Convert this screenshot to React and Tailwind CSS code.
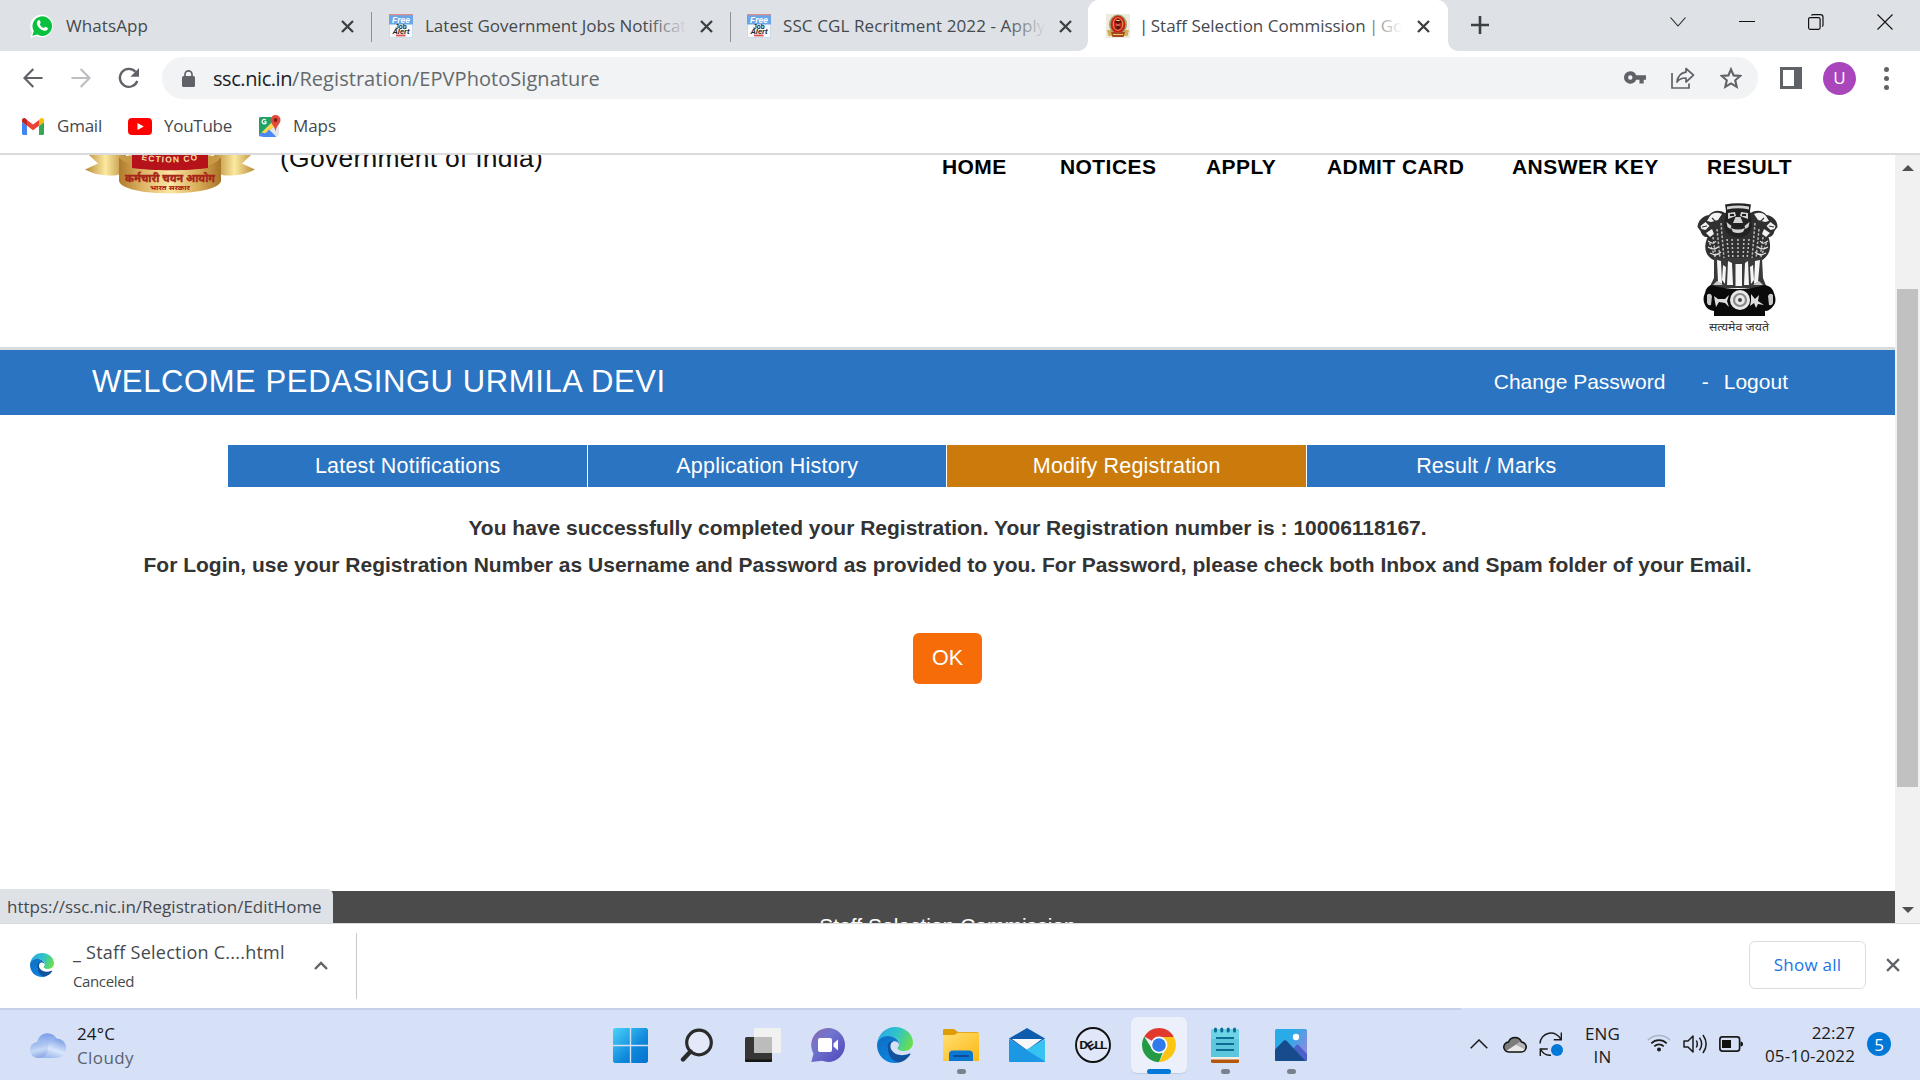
const UI = "font-['Open_Sans',sans-serif]";

/* ---------- browser icons ---------- */

const WhatsAppIcon = () => (
  <svg className="w-6 h-6 shrink-0" viewBox="0 0 24 24">
    <path d="M.5 23.8 2 18A11.3 11.3 0 1 1 6.300 22z" fill="#fff" />
    <path d="M2.300 21.700 3.800 17A9.800 9.800 0 1 1 7.400 20.600z" fill="#0ac03f" />
    <path d="M8.500 6.300c.6-.4 1.200-.1 1.400.4l.8 1.900c.1.700-.9 1.300-.8 1.800.8 1.700 2.100 2.900 3.900 3.600.6 0 1-1.300 1.700-1.200l2 1c.5.400.3 1.300-.1 1.900-1 1.200-2.400 1.400-4.200.8-3.100-1.100-5.300-3.500-6.200-6-.5-1.800.2-3.500 1.500-4.200z" fill="#fff" />
  </svg>
);

const JobAlertIcon = () => (
  <svg className="w-6 h-6 shrink-0" viewBox="0 0 24 24">
    <rect x=".5" y=".5" width="23" height="23" fill="#f7fafc" stroke="#cfdbe8" />
    <rect x="0" y="1" width="24" height="9.500" fill="#6aa5e6" />
    <rect x="0" y="0" width="24" height="1.200" fill="#e38a8a" />
    <text x="12" y="8.700" textAnchor="middle" fontFamily="Liberation Sans" fontSize="8.500" fontWeight="700" fontStyle="italic" fill="#fff">Free</text>
    <text x="12" y="15" textAnchor="middle" fontFamily="Liberation Sans" fontSize="6.500" fontWeight="700" fill="#222">Job</text>
    <text x="12" y="20" textAnchor="middle" fontFamily="Liberation Sans" fontSize="7.500" fontWeight="700" fontStyle="italic" fill="#222">Alert</text>
    <rect x="7" y="20.600" width="9.500" height="1.800" fill="#e05050" />
  </svg>
);

const SscIcon = () => (
  <svg className="w-6 h-6 shrink-0" viewBox="0 0 24 24">
    <rect width="24" height="24" fill="#ecebdc" />
    <path d="M1 16h22l-1.500 6H2.500z" fill="#d3ae55" />
    <ellipse cx="12" cy="10.500" rx="9" ry="10" fill="#9fa06a" />
    <ellipse cx="12" cy="10.500" rx="7.300" ry="9" fill="#c8201c" />
    <ellipse cx="12" cy="10" rx="4.800" ry="6.300" fill="none" stroke="#e8b04a" strokeWidth=".9" />
    <path d="M12 4.500v11M9 8h6M9.500 13.500h5" stroke="#5b1510" strokeWidth="1.800" />
    <path d="M10.500 6.500h3M10.500 11h3" stroke="#f3dc8a" strokeWidth="1" />
    <path d="M5 18h14l-1.500 5h-11z" fill="#a8471f" />
    <path d="M7 20.500h10" stroke="#e9c76a" strokeWidth="1" />
  </svg>
);

const CloseX = ({ className = "w-[13px] h-[13px]", color = "#3c4043", width = 2.3 }) => (
  <svg className={`${className} shrink-0`} viewBox="0 0 13 13">
    <path d="M1 1l11 11M12 1L1 12" stroke={color} strokeWidth={width} />
  </svg>
);

const GmailIcon = () => (
  <svg className="w-[22px] h-[17px]" viewBox="0 0 22 17">
    <path d="M0 4l5 3.700V17H1.500A1.500 1.500 0 0 1 0 15.500z" fill="#4285f4" />
    <path d="M22 4l-5 3.700V17h3.500a1.500 1.500 0 0 0 1.500-1.500z" fill="#34a853" />
    <path d="M17 2v5.700L22 4V2.200C22 .2 19.800-.6 18.300.6z" fill="#fbbc04" />
    <path d="M5 7.700V2l6 4.500L17 2v5.700l-6 4.500z" fill="#ea4335" />
    <path d="M0 2.200V4l5 3.700V2L3.700.6C2.200-.6 0 .2 0 2.200z" fill="#c5221f" />
  </svg>
);

const YouTubeIcon = () => (
  <svg className="w-6 h-[17px]" viewBox="0 0 24 17">
    <rect width="24" height="17" rx="4" fill="#f00" />
    <path d="M9.500 5l6.300 3.500L9.500 12z" fill="#fff" />
  </svg>
);

const MapsIcon = () => (
  <svg className="w-[23px] h-[23px]" viewBox="0 0 23 23">
    <path d="M2.500 2h17A1.500 1.500 0 0 1 21 3.500v16a1.500 1.500 0 0 1-1.500 1.500h-17A1.500 1.500 0 0 1 1 19.500v-16A1.500 1.500 0 0 1 2.500 2z" fill="#e4e6e8" />
    <path d="M2.500 2H13v8L1 20V3.500A1.500 1.500 0 0 1 2.500 2z" fill="#1fa363" />
    <path d="M1 20L13.500 7.500l3 3L5 21.500H2.500A1.500 1.500 0 0 1 1 20z" fill="#4a89f3" />
    <path d="M3.500 17.500L14 7.200l3 3-8.500 8.300z" fill="#ffd84d" />
    <path d="M4 22l7-7.500 7.500 7.500z" fill="#4a89f3" />
    <path d="M17.500 0A5 5 0 0 0 12.500 5c0 4 4 5 5 11.500C18.500 10 22.500 9 22.500 5a5 5 0 0 0-5-5z" fill="#e1493b" />
    <circle cx="17.500" cy="5" r="1.900" fill="#7a1f18" />
    <path d="M7.800 5A2.200 2.200 0 1 0 8 8V6.800H6.300" fill="none" stroke="#fff" strokeWidth="1.200" />
  </svg>
);

const BackIcon = () => (
  <svg className="w-5 h-5" viewBox="0 0 20 20" fill="none" stroke="#5f6368" strokeWidth="2.200">
    <path d="M19.500 10H1.800M10.300 1L1.500 10l8.800 9" />
  </svg>
);
const ForwardIcon = () => (
  <svg className="w-5 h-5" viewBox="0 0 20 20" fill="none" stroke="#bcbec1" strokeWidth="2.200">
    <path d="M.5 10h17.700M9.700 1l8.800 9-8.800 9" />
  </svg>
);
const ReloadIcon = () => (
  <svg className="w-[22px] h-[22px] -ml-px" viewBox="0 0 22 22">
    <path d="M19.300 14A9 9 0 1 1 17.500 4.700" fill="none" stroke="#5f6368" strokeWidth="2.300" />
    <path d="M21 1v8.700h-8.600z" fill="#5f6368" />
  </svg>
);
const LockIcon = () => (
  <svg className="w-[13px] h-[17px]" viewBox="0 0 13 17">
    <rect y="6" width="13" height="11" rx="1.500" fill="#5f6368" />
    <path d="M3 7V4.300a3.500 3.500 0 0 1 7 0V7" fill="none" stroke="#5f6368" strokeWidth="1.700" />
  </svg>
);
const KeyIcon = () => (
  <svg className="w-[22px] h-[13px] mb-0.5" viewBox="0 0 22 13">
    <path fillRule="evenodd" d="M6.300.2a6.300 6.300 0 1 0 5.900 8.500h3.300v3.800h4.200V8.700H22V4.300H12.200A6.300 6.300 0 0 0 6.300.2zm0 4.100a2.200 2.200 0 1 1 0 4.400 2.200 2.200 0 0 1 0-4.400z" fill="#5f6368" />
  </svg>
);
const ShareIcon = () => (
  <svg className="w-6 h-[22px]" viewBox="0 0 24 22" fill="none" stroke="#5f6368" strokeWidth="1.700">
    <path d="M1 6v15h17v-4.500" />
    <path d="M15 1.500l7.500 6.700L15 15v-4c-4.500-.2-7 1.300-9 4 .6-5 3-9 9-9.800z" strokeLinejoin="round" />
  </svg>
);
const StarIcon = () => (
  <svg className="w-[22px] h-[22px]" viewBox="0 0 22 22">
    <path d="M11 2.300l2.600 6.100 6.600.6-5 4.300 1.500 6.500-5.700-3.400-5.700 3.400 1.500-6.500-5-4.300 6.600-.6z" fill="none" stroke="#5f6368" strokeWidth="2.100" />
  </svg>
);

/* ---------- page emblems ---------- */

const SscCrest = () => (
  <svg className="w-[172px] h-[39px] shrink-0" viewBox="0 0 172 39">
    <defs>
      <linearGradient id="crestGold" x1="0" x2="1">
        <stop offset="0" stopColor="#b98a35" />
        <stop offset=".5" stopColor="#fbe9a0" />
        <stop offset="1" stopColor="#b98a35" />
      </linearGradient>
      <linearGradient id="crestBand" x1="0" x2="1">
        <stop offset="0" stopColor="#b07a2c" />
        <stop offset=".22" stopColor="#dcb263" />
        <stop offset=".5" stopColor="#fae7a4" />
        <stop offset=".78" stopColor="#d8ab56" />
        <stop offset="1" stopColor="#a87428" />
      </linearGradient>
    </defs>
    <path d="M5 0h37v15c-3 4-8 5.500-14 5.500C18 20.500 9 19 1 14.500l13-6z" fill="url(#crestGold)" />
    <path d="M167 0h-37v15c3 4 8 5.500 14 5.500 10 0 19-1.500 27-6l-13-6z" fill="url(#crestGold)" />
    <path d="M36 2l13-2v14l-13 4zM136 2l-13-2v14l13 4z" fill="#c99b46" />
    <path d="M35 2c8 15 94 18 102 0v24c-3 16-98 17-102 0z" fill="url(#crestBand)" />
    <path d="M48 0h76v13c-20 3-56 3-76 0z" fill="#b5121b" />
    <path id="crestArc" d="M54 4q32 7 64 0" fill="none" />
    <text fontFamily="Liberation Sans" fontSize="8.500" fontWeight="700" fill="#f5dfa0" letterSpacing="1.200">
      <textPath href="#crestArc" startOffset="50%" textAnchor="middle">ECTION CO</textPath>
    </text>
    <text x="86" y="26.500" textAnchor="middle" fontFamily="Noto Sans Devanagari, Noto Sans, sans-serif" fontSize="11.500" fontWeight="800" fill="#a82418" stroke="#a82418" strokeWidth=".3" textLength="90" lengthAdjust="spacingAndGlyphs">कर्मचारी चयन आयोग</text>
    <text x="86" y="35" textAnchor="middle" fontFamily="Noto Sans Devanagari, Noto Sans, sans-serif" fontSize="7" fontWeight="800" fill="#a82418" textLength="40" lengthAdjust="spacingAndGlyphs">भारत सरकार</text>
  </svg>
);

const StateEmblem = () => (
  <svg className="w-[82px] h-[130px]" viewBox="0 0 82 130">
    {/* side lions */}
    <path d="M28 10C22 6 15 8 12 12 5 13 1 18 .5 24l3 4c2 6 5 6 7 6-4 10-3 18 6 23h49c8-6 9-13 6-23 3 0 5-2 6-6l3-4c0-6-4-11-11-12-3-4-10-6-16-2z" fill="#303030" />
    <path d="M13 13c3-4 8-4 12-2l-4 6-7 2-4-1zM69 13c-3-4-8-4-12-2l4 6 7 2 4-1zM3.500 23l5-4 4 4-4 4-4-1zM78.500 23l-5-4-4 4 4 4 4-1zM9 30l6-4 2 5-4 3zM73 30l-6-4-2 5 4 3z" fill="#f2f2f2" />
    <path d="M15 15l5 5M67 15l-5 5M5 24l5-1M77 24l-5-1" stroke="#333" strokeWidth="1.200" />
    {/* manes */}
    <path d="M16 34l3 21M20 26l3 30M24 20l3 36M66 34l-3 21M62 26l-3 30M58 20l-3 36M12.500 40l6 15M69.500 40l-6 15" stroke="#b8b8b8" strokeWidth="1.500" strokeDasharray="2.500 1.700" fill="none" />
    <path d="M30 36l2 21M35 36l1 21M41 36v22M47 36l-1 21M52 36l-2 21" stroke="#c4c4c4" strokeWidth="1.500" strokeDasharray="2 2" fill="none" />
    <path d="M11 38c4 3 6 3 8 0M11 44c4 3 8 2 10 0M13 50c5 3 8 2 11-1M71 38c-4 3-6 3-8 0M71 44c-4 3-8 2-10 0M69 50c-5 3-8 2-11-1" stroke="#e2e2e2" strokeWidth="1.100" fill="none" />
    {/* centre head */}
    <path d="M28 1.500q13-2.500 26 0l-1 6 2 16q-3 11-14 11T27 23.500l2-16z" fill="#222" />
    <path d="M30 3.500q11-2 22 0v3q-11-2.500-22 0zM31 10l7-1 1 4-8 3zM51 10l-7-1-1 4 8 3zM38.500 14h5l2.500 6H36zM29.500 19l5 4-1 3-3-2zM52.500 19l-5 4 1 3 3-2zM34 25q7 3 14 0l-2 4q-5 2-10 0z" fill="#d2d2d2" />
    <path d="M33 12h4M45 12h4M36 22.500q5 2 10 0" stroke="#222" strokeWidth="1.800" />
    {/* legs */}
    <path d="M17 55h48l1 20 4 10H12l5-10z" fill="#3a3a3a" />
    <path d="M20 57l1 22 4 2-1-23zM26 62l-1 15 3 4 1-17zM31 58l-1 24h6l-1-22zM38.500 61v22H45V61zM48 60l-1 22h5l-1-24zM53 64l1 17 3-4-1-15zM58 58l-1 23 4-2 2-22z" fill="#f6f6f6" />
    <path d="M16 82l4-4 6 4zM66 82l-4-4-6 4z" fill="#ccc" />
    {/* abacus */}
    <path d="M14 82q27 8 54 0 7 1 9 8 3 8 0 12-4 6-9 6v5H17v-5q-7-1-9-6-3-6 0-12 1-6 6-8z" fill="#0a0a0a" />
    <path d="M10 92q3-3 5 1l-1 9q-3 1-4-2zM76 92q-3-3-5 1l1 9q3 1 4-2z" fill="#c9c9c9" />
    <path d="M17 93l4 3h7l4-4-2 6 2 6-4-4-6-1-3 5-1-5z" fill="#ddd" />
    <path d="M54 91l4 5 4-4-1 6 6 4-6-1-2 4-2-5-4 3 1-5z" fill="#ddd" />
    <circle cx="43" cy="97" r="10" fill="#e9e9e9" />
    <circle cx="43" cy="97" r="6" fill="none" stroke="#8a8a8a" strokeWidth="2.200" />
    <circle cx="43" cy="97" r="2" fill="#444" />
    <text x="42" y="127.500" textAnchor="middle" fontFamily="Noto Sans Devanagari, Noto Sans, sans-serif" fontSize="11" fill="#333" textLength="60" lengthAdjust="spacingAndGlyphs">सत्यमेव जयते</text>
  </svg>
);

/* ---------- taskbar icons ---------- */

const EdgeIcon = ({ className }) => (
  <svg className={className} viewBox="0 0 36 36">
    <defs>
      <linearGradient id="edgeTop" x1="0" y1=".3" x2="1" y2=".6">
        <stop offset="0" stopColor="#2ba8e8" />
        <stop offset=".5" stopColor="#2fc3c9" />
        <stop offset="1" stopColor="#6be04a" />
      </linearGradient>
      <linearGradient id="edgeLeft" x1="0" y1="0" x2=".6" y2="1">
        <stop offset="0" stopColor="#0f6ec0" />
        <stop offset="1" stopColor="#0a84e0" />
      </linearGradient>
    </defs>
    <path d="M0 17C1 7 9 0 18 0c10 0 18 7 18 15.500 0 5-4 8.500-9 8.500-4 0-6.500-1.500-6.500-3 0-1 1.700-1.500 1.700-4 0-4-4-7.500-9.500-7.500C7 9.500 2 12 0 17z" fill="url(#edgeTop)" />
    <path d="M0 18c.5-5.500 5-9 11-9 6.500 0 11 4 11.200 8.500-1-3-4-4-6.500-3C11 16 9.500 21 12 26c2 4.500 6 8 11 9a18 18 0 0 1-5 1C8 36 0 28.500 0 18z" fill="url(#edgeLeft)" />
    <path d="M10.500 20c0-4 3-6.500 6-6-3 1.500-4 5.500-2 9 3.500 5.500 11 6.500 18 3.500.8-.3 1.300.2.800 1A18 18 0 0 1 22 35.500c-7-1-11.500-8-11.500-15.500z" fill="#10529e" />
  </svg>
);

const WindowsIcon = () => (
  <svg className="w-[35px] h-[35px] mr-0.5" viewBox="0 0 35 35">
    <defs>
      <linearGradient id="winBlue" x1="0" y1="0" x2="35" y2="35" gradientUnits="userSpaceOnUse">
        <stop offset="0" stopColor="#4ad4fb" />
        <stop offset=".6" stopColor="#0f87da" />
        <stop offset="1" stopColor="#0473cf" />
      </linearGradient>
    </defs>
    <path d="M1.500 0H16.800V16.800H0V1.500zM18.200 0H33.500L35 1.500V16.800H18.200zM0 18.200H16.800V35H1.500L0 33.500zM18.200 18.200H35V33.500L33.500 35H18.200z" fill="url(#winBlue)" />
  </svg>
);
const SearchIcon = () => (
  <svg className="w-[34px] h-[34px]" viewBox="0 0 34 34" fill="none" stroke="#2b2b2b">
    <circle cx="19" cy="14.500" r="12.300" strokeWidth="3.200" fill="#e3e9f6" />
    <path d="M10.500 23.500L3 31.500" strokeWidth="4.400" strokeLinecap="round" />
  </svg>
);
const TaskViewIcon = () => (
  <svg className="w-9 h-[34px]" viewBox="0 0 36 34">
    <rect y="9" width="27" height="25" rx="1.500" fill="#363636" />
    <path d="M0 31.500h27v1a1.500 1.500 0 0 1-1.500 1.500h-24A1.500 1.500 0 0 1 0 32.500z" fill="#151515" />
    <rect x="9" width="27" height="25" rx="1.500" fill="#f1f1f1" />
    <path d="M9 9h18v16H10.500A1.500 1.500 0 0 1 9 23.500z" fill="#bcbcbc" />
  </svg>
);
const ChatIcon = () => (
  <svg className="w-[34px] h-[34px] mr-0.5" viewBox="0 0 34 34">
    <defs>
      <linearGradient id="chatFill" x1="0" y1="0" x2="1" y2="1">
        <stop offset="0" stopColor="#8d63a8" />
        <stop offset=".35" stopColor="#7276cf" />
        <stop offset="1" stopColor="#4f46bb" />
      </linearGradient>
    </defs>
    <path d="M17 0a17 17 0 0 1 0 34c-2 0-4-.5-6-1.200L.3 34l2.200-8.500A17 17 0 0 1 17 0z" fill="url(#chatFill)" />
    <rect x="7" y="10" width="14" height="14" rx="2" fill="#fff" />
    <path d="M22.500 15.500L27 11.500v11l-4.500-4z" fill="#fff" />
  </svg>
);
const FolderIcon = () => (
  <svg className="w-9 h-[33px]" viewBox="0 0 36 33">
    <defs>
      <linearGradient id="folderFill" x1="0" y1="0" x2="1" y2="1">
        <stop offset="0" stopColor="#ffdf73" />
        <stop offset="1" stopColor="#fdb813" />
      </linearGradient>
    </defs>
    <path d="M1 0h10l4 3h19.500L36 4.500V12H0V1z" fill="#dd9c08" />
    <path d="M0 6h11l4-2.300h20A1 1 0 0 1 36 5v27H0z" fill="url(#folderFill)" />
    <path d="M6 32v-6.500q0-4 4-4h16q4 0 4 4V32z" fill="#0a78d0" />
    <path d="M11 27h14" stroke="#0b4b93" strokeWidth="2" strokeLinecap="round" />
  </svg>
);
const MailIcon = () => (
  <svg className="w-9 h-[34px]" viewBox="0 0 36 34">
    <path d="M0 10.500L18 0l18 10.500L18 23z" fill="#0d5cae" />
    <path d="M3 11h30L18 22z" fill="#f7f7f7" />
    <path d="M36 11v22a1 1 0 0 1-1 1H10L18 21.500z" fill="#37c3f2" />
    <path d="M0 11l36 22.400q-.5.600-1 .600H1a1 1 0 0 1-1-1z" fill="#1c97e4" />
  </svg>
);
const DellIcon = () => (
  <svg className="w-9 h-9" viewBox="0 0 36 36">
    <circle cx="18" cy="18" r="17" fill="#dfe7f8" stroke="#111" strokeWidth="1.900" />
    <g fontFamily="Liberation Sans" fontSize="11.500" fontWeight="700" fill="#111" stroke="#111" strokeWidth=".2">
      <text x="4.500" y="22">D</text>
      <text x="11.800" y="22.500" transform="rotate(-32 16 18)">E</text>
      <text x="19.500" y="22">L</text>
      <text x="25.300" y="22">L</text>
    </g>
  </svg>
);
const ChromeIcon = () => (
  <svg className="w-[34px] h-[34px]" viewBox="0 0 34 34">
    <path d="M17 17L2.300 8.500A17 17 0 0 1 31.700 8.500z" fill="#e03a2f" />
    <path d="M17 9h14.900A17 17 0 0 1 17 34l6.900-13z" fill="#fcc413" />
    <path d="M2.300 8.500L10 21l6.900 4 3.900-.5L17 34A17 17 0 0 1 2.300 8.500z" fill="#249a45" />
    <circle cx="17" cy="17" r="8.400" fill="#fff" />
    <circle cx="17" cy="17" r="6.800" fill="#2f7bec" />
  </svg>
);
const NotepadIcon = () => (
  <svg className="w-7 h-9" viewBox="0 0 28 36">
    <path d="M0 31h28v3.500q0 1.500-1.500 1.500h-25Q0 36 0 34.500z" fill="#b4560c" />
    <path d="M0 29h28v3.500H0z" fill="#f2efe9" />
    <path d="M0 4q0-2 2-2h24q2 0 2 2v26H0z" fill="#5cc6dd" />
    <path d="M0 4q0-2 2-2h24q2 0 2 2v8H0z" fill="#6fd3e6" />
    <path d="M5 11h18M5 17h18M5 23h18" stroke="#0b6c94" strokeWidth="2" />
    <path d="M4.500 2v2M10.800 2v2M17.200 2v2M23.500 2v2" stroke="#0b6c94" strokeWidth="3" strokeLinecap="round" />
  </svg>
);
const PhotosIcon = () => (
  <svg className="w-8 h-8" viewBox="0 0 32 32">
    <defs>
      <linearGradient id="photoSky" x1="0" x2="1" y1="0" y2=".6">
        <stop offset=".45" stopColor="#29abe8" />
        <stop offset="1" stopColor="#8b8be0" />
      </linearGradient>
    </defs>
    <rect width="32" height="32" rx="1.500" fill="url(#photoSky)" />
    <path d="M14 24l7.500-8q1-.9 2 0L32 25v6q0 1-1 1H16z" fill="#4a61cc" />
    <path d="M0 20.500l8.500-8.700q1.500-1.200 3 0L30.500 32H1q-1 0-1-1z" fill="#164c8c" />
    <circle cx="21" cy="8" r="3.200" fill="#fff" />
  </svg>
);
const WeatherIcon = () => (
  <svg className="w-9 h-7" viewBox="0 0 36 28">
    <defs>
      <linearGradient id="cloudBack" x1="0" y1="0" x2="0" y2="1">
        <stop offset="0" stopColor="#7b9ee9" />
        <stop offset=".7" stopColor="#bfd2f6" />
      </linearGradient>
      <linearGradient id="cloudSide" x1="0" y1="0" x2=".3" y2="1">
        <stop offset="0" stopColor="#8fafe9" />
        <stop offset=".6" stopColor="#c5d8f7" />
        <stop offset="1" stopColor="#8eabe4" />
      </linearGradient>
      <linearGradient id="cloudFront" x1=".9" y1="0" x2=".4" y2="1">
        <stop offset="0" stopColor="#6f95e2" />
        <stop offset=".6" stopColor="#d9e6fc" />
        <stop offset="1" stopColor="#9fb9ec" />
      </linearGradient>
    </defs>
    <path d="M7 13a10.500 10.500 0 0 1 20.500-2.500V24H7z" fill="url(#cloudBack)" />
    <path d="M8 12c4.500 0 8.500 2.500 9.500 7l2 9H8a8 8 0 0 1 0-16z" fill="url(#cloudSide)" />
    <path d="M26.500 8.500A9.700 9.700 0 0 1 26.500 28H8c6 0 9.500-3 10-10 .5-6 4-9.500 8.500-9.500z" fill="url(#cloudFront)" />
  </svg>
);

/* ---------- sections ---------- */

const Tab = ({ icon, title, className, textClass, fade }) => (
  <div className={`flex items-center h-[51px] pt-px ${className}`}>
    {icon}
    <div className={`relative overflow-hidden whitespace-nowrap text-[17px] leading-6 text-[#45494d] ${textClass}`}>
      {title}
      {fade && <span className={`absolute right-0 top-0 h-full w-10 bg-linear-to-r from-transparent ${fade}`} />}
    </div>
    <CloseX />
  </div>
);

const TabStrip = () => (
  <div className="flex h-[51px] bg-[#dee1e6]">
    <Tab icon={<WhatsAppIcon />} title="WhatsApp" className="w-[371px] pl-[30px]" textClass="ml-3 w-[275px] tracking-[0.09px]" />
    <div className="w-px h-[30px] mt-3 mr-px bg-[#8e9196] shrink-0" />
    <Tab icon={<JobAlertIcon />} title="Latest Government Jobs Notificat" className="w-[357px] pl-4" textClass="ml-3 w-[262px] mr-[13px]" fade="to-[#dee1e6]" />
    <div className="w-px h-[30px] mt-3 bg-[#8e9196] shrink-0" />
    <div className="w-[357px] bg-[#dee1e6]">
      <Tab icon={<JobAlertIcon />} title="SSC CGL Recritment 2022 - Apply" className="pl-4" textClass="ml-3 w-[263px] mr-[13px] tracking-[0.1px]" fade="to-[#dee1e6]" />
    </div>
    <div className="w-[360px] rounded-t-[11px] bg-white relative">
      <svg className="absolute -left-2.5 bottom-0 w-2.5 h-2.5" viewBox="0 0 10 10"><path d="M10 0v10H0A10 10 0 0 0 10 0z" fill="#fff" /></svg>
      <Tab
        icon={<SscIcon />}
        title={<><span className="tracking-[-1px]">| </span>Staff Selection Commission<span className="tracking-[-1px]"> | </span>Go</>}
        className="pl-[18px]"
        textClass="ml-[9px] w-[263px] mr-[15px]"
        fade="to-white"
      />
      <svg className="absolute -right-2.5 bottom-0 w-2.5 h-2.5" viewBox="0 0 10 10"><path d="M0 0v10h10A10 10 0 0 1 0 0z" fill="#fff" /></svg>
    </div>
    <svg className="w-[18px] h-[18px] ml-[23px] mt-4" viewBox="0 0 18 18"><path d="M9 0v18M0 9h18" stroke="#3c4043" strokeWidth="2.600" /></svg>
    <div className="flex h-[43px] items-center ml-auto pr-[27px] gap-[53px]">
      <svg className="w-4 h-2.5" viewBox="0 0 16 10" fill="none" stroke="#222" strokeWidth="1.100"><path d="M.5.5L8 9l7.500-8.500" /></svg>
      <svg className="w-4 h-4" viewBox="0 0 16 16"><path d="M0 7.500h16" stroke="#111" /></svg>
      <svg className="w-4 h-4" viewBox="0 0 16 16" fill="none" stroke="#111" strokeWidth="1.200"><rect x=".6" y="3.600" width="11.500" height="11.700" rx="1.500" /><path d="M3.500 1.500q.5-.9 1.500-.9h7.500q2.500 0 2.500 2.500v8q0 1-.8 1.400" /></svg>
      <svg className="w-4 h-4" viewBox="0 0 16 16" stroke="#111" strokeWidth="1.100"><path d="M.5.500l15 15M15.500.500l-15 15" /></svg>
    </div>
  </div>
);

const Toolbar = () => (
  <div className="flex items-center h-[54px] bg-white">
    <div className="flex items-center w-[162px] pl-[23px] gap-7">
      <BackIcon /><ForwardIcon /><ReloadIcon />
    </div>
    <div className="flex items-center w-[1596px] h-[42px] rounded-full bg-[#f1f3f4] pl-5">
      <LockIcon />
      <div className="mt-0.5 ml-[18px] text-[20px] leading-7 whitespace-nowrap text-[#66696d]">
        <span className="text-[#202124] tracking-[-0.43px]">ssc.nic.in</span><span className="tracking-[0.05px]">/Registration/EPVPhotoSignature</span>
      </div>
      <div className="flex items-center gap-[25px] ml-auto pr-4">
        <KeyIcon /><ShareIcon /><StarIcon />
      </div>
    </div>
    <div className="w-[22px] h-[22px] ml-[22px] border-[3px] border-r-8 border-[#5f6368]" />
    <div className="flex items-center justify-center w-[33px] h-[33px] ml-[21px] rounded-full bg-[#aa46bb] text-white text-[17px]">U</div>
    <div className="flex flex-col gap-1 ml-[28px]">
      <span className="w-[5px] h-[5px] rounded-full bg-[#5f6368]" />
      <span className="w-[5px] h-[5px] rounded-full bg-[#5f6368]" />
      <span className="w-[5px] h-[5px] rounded-full bg-[#5f6368]" />
    </div>
  </div>
);

const Bookmarks = () => (
  <div className="flex items-center h-[50px] border-b-2 border-[#dadbdc] bg-white pl-[22px] pb-1.5 text-[17px] text-[#45494d]">
    <GmailIcon /><span className="w-[71px] ml-[13px] tracking-[-0.23px]">Gmail</span>
    <YouTubeIcon /><span className="w-[94px] ml-3 tracking-[-0.27px]">YouTube</span>
    <MapsIcon /><span className="ml-3 tracking-[-0.06px]">Maps</span>
  </div>
);

const nav = [
  ["HOME", "w-[118px]"],
  ["NOTICES", "w-[146px]"],
  ["APPLY", "w-[121px]"],
  ["ADMIT CARD", "w-[185px]"],
  ["ANSWER KEY", "w-[195px]"],
  ["RESULT", "w-[188px]"],
];

const pageTabs = ["Latest Notifications", "Application History", "Modify Registration", "Result / Marks"];

const SitePage = () => (
  <div className="flex flex-col w-[1895px] h-full bg-white overflow-hidden font-['Liberation_Sans',Arial,sans-serif]">
    <header className="flex h-[192px] pl-[84px] shrink-0">
      <SscCrest />
      <div className="-mt-3 ml-6 w-[662px] text-[26.5px] leading-[31px] tracking-[0.25px] text-[#111] whitespace-nowrap">(Government of India)</div>
      <div className="flex flex-col">
        <nav className="flex h-6 text-[21px] leading-6 font-bold tracking-[0.43px] text-black whitespace-nowrap">
          {nav.map(([label, w]) => <a key={label} className={w}>{label}</a>)}
        </nav>
        <div className="mt-6 ml-[755px]"><StateEmblem /></div>
      </div>
    </header>
    <div className="h-[3px] shrink-0 bg-[#d9dcdc]" />
    <div className="flex items-center h-[65px] shrink-0 bg-[#2b74c1] text-white text-[21px] pl-[92px] pr-[107px] pb-px">
      <div className="text-[31px] tracking-[0.6px] pr-2">WELCOME PEDASINGU URMILA DEVI</div>
      <div className="flex ml-auto -mt-px">
        <a className="w-[208px]">Change Password</a><span className="w-[22px]">-</span><a>Logout</a>
      </div>
    </div>
    <div className="grid grid-cols-4 gap-px w-[1437px] ml-[228px] mt-[30px] shrink-0 text-[21.5px] tracking-[0.2px] text-white">
      {pageTabs.map((t) => (
        <div key={t} className={`flex items-center justify-center h-[42px] pt-px pl-px ${t === "Modify Registration" ? "bg-[#cb7b0b]" : "bg-[#2b74c1]"}`}>{t}</div>
      ))}
    </div>
    <div className="mt-[22px] shrink-0 text-center font-bold text-[21px] leading-[37px] text-[#333] whitespace-nowrap">
      <p>You have successfully completed your Registration. Your Registration number is : 10006118167.</p>
      <p>For Login, use your Registration Number as Username and Password as provided to you. For Password, please check both Inbox and Spam folder of your Email.</p>
    </div>
    <button className="self-center shrink-0 w-[69px] h-[51px] mt-[50px] pb-px rounded-md bg-[#f56c09] text-white text-[21.5px]">OK</button>
    <footer className="mt-[207px] h-[132px] shrink-0 bg-[#4b4b4b] text-white text-[21px] leading-6 text-center pt-[23px]">Staff Selection Commission</footer>
  </div>
);

const Scrollbar = () => (
  <div className="flex flex-col items-center w-[25px] h-full bg-[#f1f1f1]">
    <svg className="w-3 h-1.5 mt-2.5" viewBox="0 0 12 6"><path d="M6 0l6 6H0z" fill="#505050" /></svg>
    <div className="w-[21px] h-[498px] mt-[118px] bg-[#c1c1c1]" />
    <svg className="w-3 h-1.5 mt-auto mb-2.5" viewBox="0 0 12 6"><path d="M0 0h12L6 6z" fill="#505050" /></svg>
  </div>
);

const DownloadShelf = () => (
  <div className="flex items-center h-[85px] border-t border-[#d8dadd] bg-white text-[#45494d] pl-[30px] pb-0.5">
    <EdgeIcon className="w-6 h-6" />
    <div className="w-[241px] ml-[19px] mt-0.5">
      <div className="text-[18px] leading-6 tracking-[0.24px]">_ Staff Selection C....html</div>
      <div className="mt-[5px] text-[15px] leading-6 tracking-[-0.37px]">Canceled</div>
    </div>
    <svg className="w-3.5 h-[9px]" viewBox="0 0 14 9"><path d="M1 8l6-6 6 6" fill="none" stroke="#5f6368" strokeWidth="2.400" /></svg>
    <div className="w-px h-[66px] ml-[28px] mt-px bg-[#c6c8cb]" />
    <button className="w-[117px] h-12 ml-auto rounded-md border border-[#dadce0] text-[17px] text-[#1a73e8] font-medium tracking-[0.25px] pb-px">Show all</button>
    <div className="w-[54px] pl-5"><CloseX className="w-3.5 h-3.5" color="#5f6368" width={2.1} /></div>
  </div>
);

const Slot = ({ children, dot, pad = "pt-5" }) => (
  <div className={`relative flex justify-center w-[66px] h-full ${pad}`}>
    {children}
    {dot && <span className="absolute left-[29px] bottom-1.5 w-[9px] h-[5px] rounded-full bg-[#7a818c]" />}
  </div>
);

const Taskbar = () => (
  <div className="relative flex h-[72px] bg-[#d6e1f8] text-[17px] text-[#1b1b1b]">
    <span className="absolute left-0 top-0 w-[1461px] h-0.5 bg-[#c5d1e8]" />
    <div className="flex w-[598px] pl-[30px]">
      <div className="pt-[22px]"><WeatherIcon /></div>
      <div className="ml-[11px] pt-3.5 leading-6">
        <div className="tracking-[0.14px]">24°C</div>
        <div className="tracking-[0.4px] text-[#5a6170]">Cloudy</div>
      </div>
    </div>
    <div className="flex">
      <Slot><WindowsIcon /></Slot>
      <Slot><SearchIcon /></Slot>
      <Slot><TaskViewIcon /></Slot>
      <Slot><ChatIcon /></Slot>
      <Slot pad="pt-[19px]"><EdgeIcon className="w-9 h-9" /></Slot>
      <Slot dot pad="pt-[21px]"><FolderIcon /></Slot>
      <Slot><MailIcon /></Slot>
      <Slot pad="pt-[19px]"><DellIcon /></Slot>
      <Slot pad="pt-[9px]">
        <div className="relative flex justify-center w-14 h-14 pt-[11px] rounded-md bg-[#ecf0fa] shadow-[0_1px_1px_#bccbe3]">
          <ChromeIcon />
          <span className="absolute bottom-[-1px] left-4 w-6 h-[5px] rounded-full bg-[#0078d7]" />
        </div>
      </Slot>
      <Slot dot pad="pt-[19px]"><NotepadIcon /></Slot>
      <Slot dot pad="pt-[21px]"><PhotosIcon /></Slot>
    </div>
    <div className="flex items-center h-full ml-auto pr-[29px]">
      <svg className="w-[18px] h-2.5 mr-[15px]" viewBox="0 0 18 10"><path d="M.7 9.300L9 1l8.300 8.300" fill="none" stroke="#1b1b1b" strokeWidth="1.500" /></svg>
      <svg className="w-6 h-[17px] mr-3" viewBox="0 0 24 17">
        <path d="M6 16a5 5 0 0 1-.5-10A7 7 0 0 1 18.500 6 5 5 0 0 1 18 16z" fill="#7d7d7d" />
        <path d="M4 14.500l9-6 9.500 5-2.500 2.500H6z" fill="#e9e9e9" />
        <path d="M13 8.500l4-3 5 3 .5 5z" fill="#b5b5b5" />
        <path d="M6 16a5 5 0 0 1-.5-10A7 7 0 0 1 18.500 6 5 5 0 0 1 18 16z" fill="none" stroke="#111" strokeWidth="1.500" />
      </svg>
      <svg className="w-6 h-6 mr-[21px]" viewBox="0 0 24 24" fill="none" stroke="#1b1b1b" strokeWidth="1.400">
        <path d="M1 11.500A11 11 0 0 1 22 7.500M22.300.5v7.300h-7.500M1.300 24v-7h7.500M1.500 17A11 11 0 0 0 12 23.300" />
        <circle cx="18" cy="18" r="6" fill="#0078d7" stroke="none" />
      </svg>
      <div className="w-[37px] mr-[26px] pt-px text-center leading-[23px] tracking-[0.13px] whitespace-nowrap">ENG<br />IN</div>
      <svg className="w-6 h-[18px] mr-3 mb-0.5" viewBox="0 0 24 18" fill="none" stroke="#1b1b1b" strokeWidth="1.500">
        <path d="M.8 6.300a15.500 15.500 0 0 1 22.400 0" stroke="#a9b5c9" />
        <path d="M4.300 9.300a11 11 0 0 1 15.400 0M7.300 12.300a6.800 6.800 0 0 1 9.400 0" strokeWidth="1.700" />
        <circle cx="12" cy="15.500" r="2" fill="#1b1b1b" stroke="none" />
      </svg>
      <svg className="w-[25px] h-5 mr-[11px]" viewBox="0 0 25 20" fill="none" stroke="#1b1b1b" strokeWidth="1.500">
        <path d="M1 7h4l5-5v16l-5-5H1z" strokeLinejoin="round" />
        <path d="M13.300 6.500q2 3.500 0 7M16.500 3.700q4.300 6.300 0 12.600M20 1q6.300 9 0 18" />
      </svg>
      <svg className="w-6 h-4 mr-[22px]" viewBox="0 0 24 16">
        <rect x=".9" y=".9" width="19.700" height="14.200" rx="2.500" fill="none" stroke="#1b1b1b" strokeWidth="1.700" />
        <rect x="3" y="4" width="9" height="8" fill="#111" />
        <path d="M21.500 5.500q2.500 0 2.500 2.500t-2.500 2.500z" fill="#111" />
      </svg>
      <div className="text-right leading-[23px] whitespace-nowrap">22:27<br /><span className="tracking-[0.13px]">05-10-2022</span></div>
      <div className="flex items-center justify-center w-6 h-6 ml-3 rounded-full bg-[#0078d7] text-white text-[17px] leading-none">5</div>
    </div>
  </div>
);

export default function App() {
  return (
    <div className={`flex flex-col w-[1920px] h-[1080px] overflow-hidden bg-white ${UI}`}>
      <TabStrip />
      <Toolbar />
      <Bookmarks />
      <div className="relative flex h-[768px]">
        <SitePage />
        <Scrollbar />
        <div className="absolute left-0 bottom-0 w-[333px] h-[34px] pl-[7px] rounded-tr-md bg-[#dee1e6] text-[17px] leading-[35px] text-[#45494d] whitespace-nowrap">https://ssc.nic.in/Registration/EditHome</div>
      </div>
      <DownloadShelf />
      <Taskbar />
    </div>
  );
}
